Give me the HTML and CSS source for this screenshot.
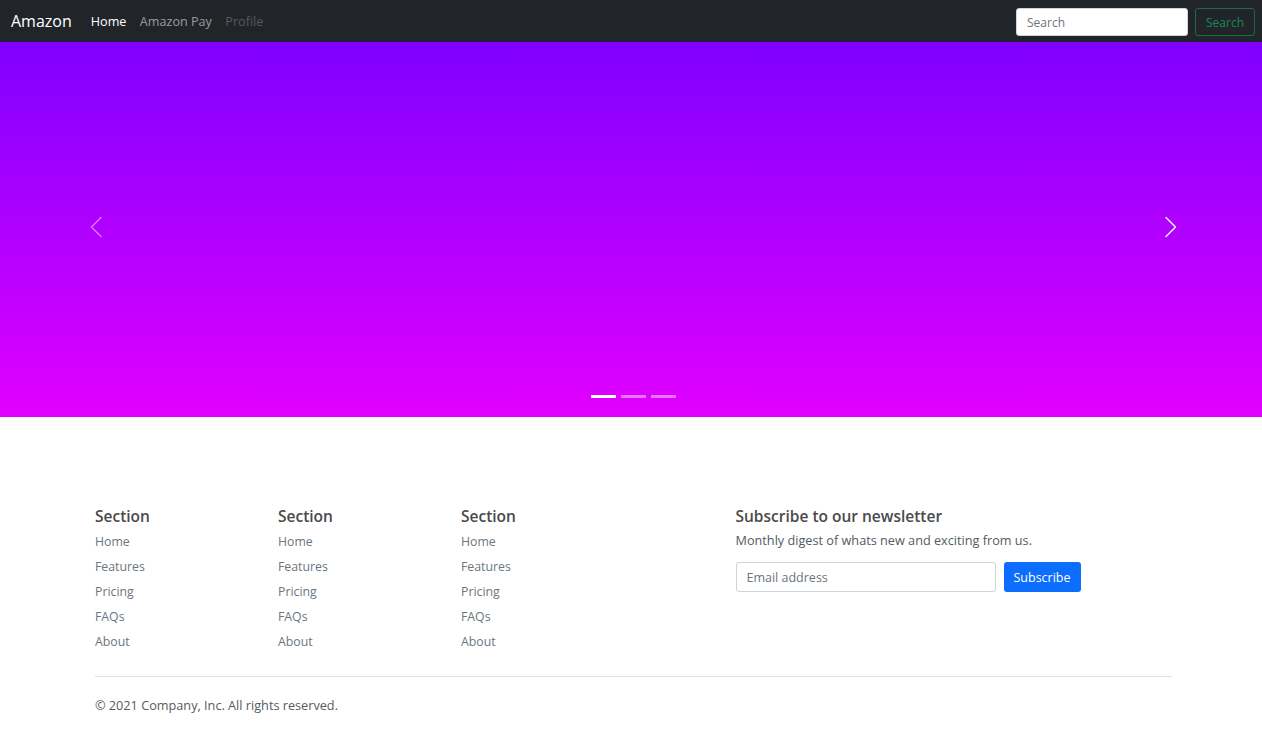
FILE: index.html
```html
<!DOCTYPE html>
<html lang="en">
<head>
<meta charset="utf-8">
<title>Amazon</title>
<link rel="stylesheet" href="styles.css">
</head>
<body>
<nav class="navbar">
  <a class="brand" href="#">Amazon</a>
  <ul class="nav-links">
    <li><a class="nav-link active" href="#">Home</a></li>
    <li><a class="nav-link" href="#">Amazon Pay</a></li>
    <li><a class="nav-link disabled" href="#">Profile</a></li>
  </ul>
  <form class="search">
    <input class="search-input" type="search" placeholder="Search">
    <button class="search-btn" type="button">Search</button>
  </form>
</nav>

<div class="carousel">
  <button class="control prev" type="button" aria-label="Previous">
    <svg width="14" height="22" viewBox="0 0 14 22"><polyline points="12,1.5 2.5,11 12,20.5" fill="none" stroke="currentColor" stroke-width="1.6" stroke-linecap="round" stroke-linejoin="round"/></svg>
  </button>
  <button class="control next" type="button" aria-label="Next">
    <svg width="14" height="22" viewBox="0 0 14 22"><polyline points="2,1.5 11.5,11 2,20.5" fill="none" stroke="currentColor" stroke-width="1.6" stroke-linecap="round" stroke-linejoin="round"/></svg>
  </button>
  <div class="indicators">
    <span class="ind active"></span>
    <span class="ind"></span>
    <span class="ind"></span>
  </div>
</div>

<footer class="footer">
  <div class="row">
    <div class="col">
      <h5 class="col-title">Section</h5>
      <ul class="links">
        <li><a href="#">Home</a></li>
        <li><a href="#">Features</a></li>
        <li><a href="#">Pricing</a></li>
        <li><a href="#">FAQs</a></li>
        <li><a href="#">About</a></li>
      </ul>
    </div>
    <div class="col">
      <h5 class="col-title">Section</h5>
      <ul class="links">
        <li><a href="#">Home</a></li>
        <li><a href="#">Features</a></li>
        <li><a href="#">Pricing</a></li>
        <li><a href="#">FAQs</a></li>
        <li><a href="#">About</a></li>
      </ul>
    </div>
    <div class="col">
      <h5 class="col-title">Section</h5>
      <ul class="links">
        <li><a href="#">Home</a></li>
        <li><a href="#">Features</a></li>
        <li><a href="#">Pricing</a></li>
        <li><a href="#">FAQs</a></li>
        <li><a href="#">About</a></li>
      </ul>
    </div>
    <div class="col newsletter">
      <h5 class="col-title news-title">Subscribe to our newsletter</h5>
      <p class="news-desc">Monthly digest of whats new and exciting from us.</p>
      <form class="news-form">
        <input class="email" type="text" placeholder="Email address">
        <button class="subscribe" type="button">Subscribe</button>
      </form>
    </div>
  </div>
  <div class="bottom">
    <p class="copy">© 2021 Company, Inc. All rights reserved.</p>
  </div>
</footer>
</body>
</html>
```

FILE: styles.css
```css
* { box-sizing: border-box; }

html, body {
  margin: 0;
  padding: 0;
}

body {
  font-family: "Open Sans", "Noto Sans", "Liberation Sans", sans-serif;
  color: #212529;
  background: #fff;
  width: 1262px;
  height: 750px;
  overflow: hidden;
}

a { text-decoration: none; }

/* Navbar */
.navbar {
  height: 42px;
  background: #212529;
  display: flex;
  align-items: center;
  padding: 0 7px 0 11px;
}

.brand {
  color: #fff;
  font-size: 16px;
  margin-right: 19px;
  line-height: 1;
}

.nav-links {
  display: flex;
  list-style: none;
  margin: 1px 0 0;
  padding: 0;
  gap: 13.5px;
  font-size: 12.6px;
}

.nav-link {
  font-size: 12.6px;
  color: rgba(255, 255, 255, 0.55);
}

.nav-link.active { color: #fff; }
.nav-link.disabled { color: rgba(255, 255, 255, 0.25); }

.search {
  margin-left: auto;
  margin-top: 2px;
  display: flex;
  gap: 7px;
}

.search-input {
  width: 172px;
  height: 28px;
  border: 1px solid #ced4da;
  border-radius: 3px;
  background: #fff;
  padding: 0 10px;
  font-family: inherit;
  font-size: 12px;
  color: #212529;
}

.search-input::placeholder { color: #6c757d; }

.search-btn {
  width: 60px;
  height: 28px;
  background: transparent;
  border: 1px solid #1c6b45;
  border-radius: 3px;
  color: #198754;
  font-family: inherit;
  font-size: 12px;
  padding: 0;
}

/* Carousel */
.carousel {
  position: relative;
  height: 375px;
  background: linear-gradient(180deg, #7f00ff 0%, #e100ff 100%);
}

.control {
  position: absolute;
  top: 0;
  bottom: 5px;
  width: 40px;
  background: none;
  border: 0;
  padding: 0;
  display: flex;
  align-items: center;
  justify-content: center;
}

.control.prev {
  left: 76px;
  color: rgba(255, 255, 255, 0.45);
}

.control.next {
  left: 1151px;
  color: rgba(255, 255, 255, 0.92);
}

.indicators {
  position: absolute;
  left: 591px;
  bottom: 19px;
  display: flex;
  gap: 5px;
}

.ind {
  width: 25px;
  height: 3px;
  background: rgba(255, 255, 255, 0.45);
}

.ind.active { background: #fff; }

/* Footer */
.footer {
  width: 1077px;
  margin-left: 95px;
  padding-top: 89px;
}

.row {
  display: grid;
  grid-template-columns: 183px 183px 183px 91.5px 345px;
  height: 170px;
}

.newsletter { grid-column: 5; }

.col-title {
  margin: 0 0 7px;
  font-size: 15.5px;
  font-weight: 600;
  color: #4a4a4a;
  line-height: 20px;
}

.col-title.news-title { margin-bottom: 5px; }

.links {
  list-style: none;
  margin: 0;
  padding: 0;
  display: flex;
  flex-direction: column;
  gap: 7px;
  font-size: 12.3px;
}

.links li {
  line-height: 18px;
  font-size: 12.3px;
}

.links a {
  font-size: 12.3px;
  color: #6c757d;
}

.news-desc {
  margin: 0 0 13px;
  font-size: 12.7px;
  color: #555b61;
  line-height: 18px;
}

.news-form {
  display: flex;
  gap: 8px;
}

.email {
  width: 260px;
  height: 30px;
  border: 1px solid #ced4da;
  border-radius: 3px;
  padding: 0 10px;
  font-family: inherit;
  font-size: 12.5px;
}

.email::placeholder { color: #6c757d; }

.subscribe {
  width: 77px;
  height: 30px;
  background: #0d6efd;
  border: 0;
  border-radius: 3px;
  color: #fff;
  font-family: inherit;
  font-size: 12.5px;
  padding: 0;
}

.bottom {
  border-top: 1px solid #dee2e6;
  padding-top: 19px;
}

.copy {
  margin: 0;
  font-size: 12.7px;
  color: #555b61;
  line-height: 18px;
}
```
